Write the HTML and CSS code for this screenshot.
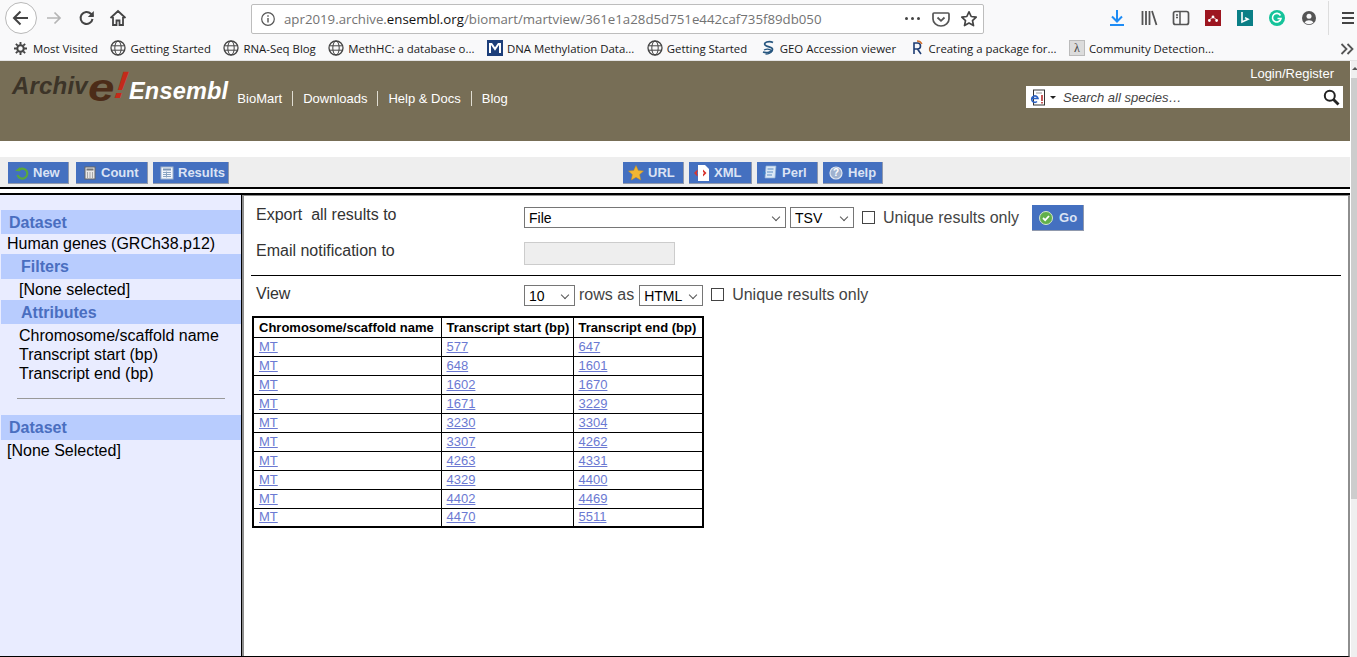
FILE: index.html
```html
<!DOCTYPE html>
<html lang="en">
<head>
<meta charset="utf-8">
<title>BioMart - MartView</title>
<link rel="stylesheet" href="styles.css">
</head>
<body>
<div class="chrome">
  <div class="navbar">
    <span class="backbtn"><svg width="22" height="22" viewBox="0 0 22 22"><path d="M18 11H4M10.500 4.500 4 11l6.500 6.500" fill="none" stroke="#444" stroke-width="2"/></svg></span>
    <svg class="nav-ic fwd" width="18" height="18" viewBox="0 0 18 18"><path d="M2 9h13M9.500 3.500 15 9l-5.500 5.500" fill="none" stroke="#b5b5b5" stroke-width="1.700"/></svg>
    <svg class="nav-ic reload" width="18" height="18" viewBox="0 0 18 18"><path d="M14.500 10a6 6 0 1 1-1.600-5.200L15 7" fill="none" stroke="#444" stroke-width="2"/><path d="M15.800 2v6h-6z" fill="#444"/></svg>
    <svg class="nav-ic home" width="18" height="18" viewBox="0 0 18 18"><path d="M1.500 9 9 2l7.500 7M4 8v8h3.500v-4.500h3V16H14V8" fill="none" stroke="#444" stroke-width="1.800"/></svg>
    <div class="urlbar">
      <svg class="info" width="16" height="16" viewBox="0 0 16 16"><circle cx="8" cy="8" r="6.300" fill="none" stroke="#555" stroke-width="1.200"/><path d="M8 7v4.500M8 4.300v1.500" stroke="#555" stroke-width="1.400"/></svg>
      <span class="url">apr2019.archive.<b>ensembl.org</b>/biomart/martview/361e1a28d5d751e442caf735f89db050</span>
      <span class="dots"><i></i><i></i><i></i></span>
      <svg class="pocket" width="18" height="18" viewBox="0 0 18 18"><path d="M2 3h14a1 1 0 0 1 1 1v5a8 7 0 0 1-16 0V4a1 1 0 0 1 1-1z" fill="none" stroke="#555" stroke-width="1.700"/><path d="m5.500 7.500 3.500 3.300 3.500-3.300" fill="none" stroke="#555" stroke-width="1.800"/></svg>
      <svg class="star" width="18" height="18" viewBox="0 0 18 18"><path d="m9 1.800 2.200 4.700 5 .6-3.700 3.500 1 5L9 13.100l-4.500 2.500 1-5L1.800 7.100l5-.6z" fill="none" stroke="#444" stroke-width="1.700" stroke-linejoin="round"/></svg>
    </div>
    <div class="tools">
      <svg width="18" height="18" viewBox="0 0 18 18"><path d="M9 1v11M4 7.500l5 5 5-5" fill="none" stroke="#1e8cf5" stroke-width="2"/><path d="M2 16h14" stroke="#1e8cf5" stroke-width="2"/></svg>
      <svg width="18" height="18" viewBox="0 0 18 18"><path d="M2.500 2v14M6 2v14M9.500 2v14M12 2l4.500 14" fill="none" stroke="#555" stroke-width="1.800"/></svg>
      <svg width="18" height="18" viewBox="0 0 18 18"><rect x="1.500" y="2.500" width="15" height="13" rx="2" fill="none" stroke="#555" stroke-width="1.700"/><path d="M8 3v12M4 6h2M4 8.500h2" stroke="#555" stroke-width="1.500"/></svg>
      <svg width="16" height="16" viewBox="0 0 16 16"><rect width="16" height="16" fill="#9d1620"/><path d="M3 10.500a1.400 1.400 0 1 1 2.800 0 1.400 1.400 0 1 1-2.800 0zM6.600 7a1.400 1.400 0 1 1 2.800 0 1.400 1.400 0 1 1-2.800 0zM10.200 10.500a1.400 1.400 0 1 1 2.800 0 1.400 1.400 0 1 1-2.800 0z" fill="#fff"/><path d="M5 9.500 7 7.500M9 7.500l2 2" stroke="#fff"/></svg>
      <svg width="16" height="16" viewBox="0 0 16 16"><rect width="16" height="16" fill="#0b7f86"/><path d="M5 2v10l6-2.800-3-1.600" fill="none" stroke="#fff" stroke-width="1.600"/></svg>
      <svg width="16" height="16" viewBox="0 0 16 16"><circle cx="8" cy="8" r="8" fill="#15c39a"/><path d="M11.500 5.500a4.300 4.300 0 1 0 .5 3H8.500" fill="none" stroke="#fff" stroke-width="1.600"/></svg>
      <svg width="16" height="16" viewBox="0 0 16 16"><circle cx="8" cy="8" r="7" fill="#555"/><circle cx="8" cy="6.200" r="2.500" fill="#f9f9fa"/><path d="M3.500 12.500a5 4 0 0 1 9 0 7 7 0 0 1-9 0z" fill="#f9f9fa"/></svg>
    </div>
    <span class="tool-sep"></span>
    <svg class="menu" width="16" height="16" viewBox="0 0 16 16"><path d="M2 3h12M2 8h12M2 13h12" stroke="#444" stroke-width="2"/></svg>
  </div>
  <div class="bookmarks">
    <span class="bm bm-first"><svg width="13" height="13" viewBox="0 0 14 14"><circle cx="7" cy="7" r="3.500" fill="none" stroke="#444" stroke-width="2.200"/><path d="M7 0v3M7 11v3M0 7h3M11 7h3M2 2l2 2M10 10l2 2M12 2l-2 2M4 10l-2 2" stroke="#444" stroke-width="2"/></svg>Most Visited</span>
    <span class="bm"><svg class="globe" viewBox="0 0 16 16"><use href="#globe"/></svg>Getting Started</span>
    <span class="bm"><svg class="globe" viewBox="0 0 16 16"><use href="#globe"/></svg>RNA-Seq Blog</span>
    <span class="bm"><svg class="globe" viewBox="0 0 16 16"><use href="#globe"/></svg>MethHC: a database o...</span>
    <span class="bm"><svg class="globe" viewBox="0 0 16 16"><rect width="16" height="16" fill="#1d3f7a"/><path d="M3 13V4h1.500L8 9l3.500-5H13v9" fill="none" stroke="#fff" stroke-width="2"/></svg>DNA Methylation Data...</span>
    <span class="bm"><svg class="globe" viewBox="0 0 16 16"><use href="#globe"/></svg>Getting Started</span>
    <span class="bm"><svg class="globe" viewBox="0 0 16 16"><path d="M13 2.500C9 .5 3 2.500 5 5s8 1.500 7.500 4.500S6 13 3 12" fill="none" stroke="#27567f" stroke-width="1.700"/><path d="M4 10c3-1.500 6-1 8 1c-1 2-4 3-6.500 3" fill="none" stroke="#27567f" stroke-width="1.300"/></svg>GEO Accession viewer</span>
    <span class="bm"><svg class="globe" viewBox="0 0 16 16"><path d="M5 14V3h3.500a3 3 0 0 1 0 6H5m3.500 0L12 14" fill="none" stroke="#1f3d73" stroke-width="1.600"/><path d="M8 1c2 0 4 1 5 3" fill="none" stroke="#d3702c" stroke-width="1.300"/></svg>Creating a package for...</span>
    <span class="bm"><span class="lambda">λ</span>Community Detection...</span>
    <svg class="chev" width="14" height="14" viewBox="0 0 14 14"><path d="m1.500 2 5 5-5 5M7.500 2l5 5-5 5" fill="none" stroke="#555" stroke-width="1.800"/></svg>
  </div>
</div>

<div class="viewport">
  <div class="page">
    <header class="masthead">
      <div class="brand">
        <span class="logo-archive"><span class="logo-archiv">Archiv</span><i class="logo-e">e</i><i class="logo-bang">!</i></span><span class="logo-ensembl">Ensembl</span>
      </div>
      <nav class="topnav"><a>BioMart</a><a>Downloads</a><a>Help &amp; Docs</a><a>Blog</a></nav>
      <div class="mast-right">
        <a class="login">Login/Register</a>
        <div class="search">
          <svg class="search-species" width="16" height="17" viewBox="0 0 16 17"><rect x="3.500" y="1" width="11" height="15" fill="#fff" stroke="#333"/><path d="M6 4h6" stroke="#999"/><path d="M12 6v6M12 13v1.500" stroke="#b02020" stroke-width="1.500"/><path d="M2 9.500h6a3.200 3.200 0 1 0-1 3" fill="none" stroke="#2b62c4" stroke-width="1.600"/></svg>
          <span class="caret"></span>
          <span class="search-text">Search all species…</span>
          <svg class="loupe" width="17" height="17" viewBox="0 0 17 17"><circle cx="6.800" cy="6.800" r="5" fill="none" stroke="#222" stroke-width="2"/><path d="m10.500 10.500 5 5" stroke="#222" stroke-width="2.800"/></svg>
        </div>
      </div>
    </header>
    <div class="gap"></div>
    <div class="mart-toolbar">
      <div class="btn-group">
        <a class="btn btn-new"><svg viewBox="0 0 14 14"><path d="M3 5a5 5 0 1 1-.5 4" fill="none" stroke="#5aa83c" stroke-width="2.200"/><path d="M0 5h5.500L5 1z" fill="#5aa83c"/></svg>New</a>
        <a class="btn btn-count"><svg viewBox="0 0 14 14"><rect x="2" y="1" width="10" height="12" fill="#e8e8e8" stroke="#666"/><rect x="3.500" y="2.500" width="7" height="2" fill="#777"/><path d="M4 7h1M6.500 7h1M9 7h1M4 9h1M6.500 9h1M9 9h1M4 11h1M6.500 11h1M9 11h1" stroke="#666"/></svg>Count</a>
        <a class="btn btn-results"><svg viewBox="0 0 14 14"><rect x="1" y="1" width="12" height="12" fill="#f2f6fb" stroke="#9fb4cc"/><path d="M3 3.500h8" stroke="#7d97b5" stroke-width="2"/><path d="M3 6.500h8M3 8.500h8M3 10.500h8M6.500 5.500v6" stroke="#8aa5c2"/></svg>Results</a>
      </div>
      <div class="btn-group btn-center">
        <a class="btn btn-url"><svg viewBox="0 0 16 16"><path d="m8 .5 2.300 5 5.200.6-3.900 3.500 1.100 5.400L8 12.300 3.300 15l1.100-5.400L.5 6.100l5.200-.6z" fill="#f2b632" stroke="#c98f1a" stroke-width=".5"/></svg>URL</a>
        <a class="btn btn-xml"><svg viewBox="0 0 16 16"><path d="M4 0h7l4 4v12H4z" fill="#fff"/><path d="m0 8 3.500-3.500v2.300L2.500 8l1 1.200v2.300zM9 4.500 12.500 8 9 11.500V9.200L10 8 9 6.800z" fill="#d8322c"/></svg>XML</a>
        <a class="btn btn-perl"><svg viewBox="0 0 16 16"><path d="M4 1h10l-1 12H3z" fill="#dbe8f6" stroke="#8fb0d4" stroke-width=".7"/><path d="M5.500 4h6M5 7h6M5 10h5" stroke="#5e8fc4"/><path d="m1 6 3 2-3 2z" fill="#3a7fc8"/></svg>Perl</a>
        <a class="btn btn-help"><svg viewBox="0 0 14 14"><circle cx="7" cy="7" r="6" fill="#9fb2cf" stroke="#dfe6f0" stroke-width="1.200"/><text class="help-q" x="7" y="10.300" text-anchor="middle">?</text></svg>Help</a>
      </div>
    </div>
    <div class="rule"></div>
    <main class="workspace">
      <aside class="sidebar">
        <div class="sb-head">Dataset</div>
        <div class="sb-line">Human genes (GRCh38.p12)</div>
        <div class="sb-head sb-sub">Filters</div>
        <div class="sb-line sb-in">[None selected]</div>
        <div class="sb-head sb-sub sb-attr">Attributes</div>
        <div class="sb-list">
          <div>Chromosome/scaffold name</div>
          <div>Transcript start (bp)</div>
          <div>Transcript end (bp)</div>
        </div>
        <div class="sb-divider"></div>
        <div class="sb-head sb-second">Dataset</div>
        <div class="sb-line sb-last">[None Selected]</div>
      </aside>
      <section class="results">
        <div class="form-row row-export">
          <span class="label">Export&nbsp; all results to</span>
          <div class="controls">
            <span class="select sel-file">File</span>
            <span class="select sel-tsv">TSV</span>
            <span class="check"></span>
            <span class="check-label">Unique results only</span>
            <a class="btn btn-go"><svg viewBox="0 0 14 14"><circle cx="7" cy="7" r="6.500" fill="#62b04a" stroke="#d5e8cc"/><path d="m4 7 2.200 2.200L10 5" fill="none" stroke="#fff" stroke-width="1.800"/></svg>Go</a>
          </div>
        </div>
        <div class="form-row row-email">
          <span class="label">Email notification to</span>
          <div class="controls"><span class="email-input"></span></div>
        </div>
        <div class="hr"></div>
        <div class="form-row row-view">
          <span class="label">View</span>
          <div class="controls">
            <span class="select sel-rows">10</span>
            <span class="check-label">rows as</span>
            <span class="select sel-html">HTML</span>
            <span class="check"></span>
            <span class="check-label">Unique results only</span>
          </div>
        </div>
        <table class="preview">
          <thead><tr><th class="c1">Chromosome/scaffold name</th><th class="c2">Transcript start (bp)</th><th class="c3">Transcript end (bp)</th></tr></thead>
          <tbody>
            <tr><td><a>MT</a></td><td><a>577</a></td><td><a>647</a></td></tr>
            <tr><td><a>MT</a></td><td><a>648</a></td><td><a>1601</a></td></tr>
            <tr><td><a>MT</a></td><td><a>1602</a></td><td><a>1670</a></td></tr>
            <tr><td><a>MT</a></td><td><a>1671</a></td><td><a>3229</a></td></tr>
            <tr><td><a>MT</a></td><td><a>3230</a></td><td><a>3304</a></td></tr>
            <tr><td><a>MT</a></td><td><a>3307</a></td><td><a>4262</a></td></tr>
            <tr><td><a>MT</a></td><td><a>4263</a></td><td><a>4331</a></td></tr>
            <tr><td><a>MT</a></td><td><a>4329</a></td><td><a>4400</a></td></tr>
            <tr><td><a>MT</a></td><td><a>4402</a></td><td><a>4469</a></td></tr>
            <tr><td><a>MT</a></td><td><a>4470</a></td><td><a>5511</a></td></tr>
          </tbody>
        </table>
      </section>
    </main>
  </div>
  <div class="scrollbar"><span class="sb-arrow"></span><span class="thumb"></span></div>
</div>
<svg class="defs" width="0" height="0"><defs><g id="globe"><circle cx="8" cy="8" r="7" fill="none" stroke="#444" stroke-width="1.300"/><ellipse cx="8" cy="8" rx="3.200" ry="7" fill="none" stroke="#444"/><path d="M1.500 5.800h13M1.500 10.200h13" stroke="#444"/></g></defs></svg>
</body>
</html>
```
FILE: styles.css
```css
* { box-sizing: border-box; }
html, body { margin: 0; height: 657px; overflow: hidden; background: #fff; }
body { font-family: "Liberation Sans", Arial, sans-serif; color: #000; display: flex; flex-direction: column; }
a { cursor: pointer; }
.defs { position: absolute; }

.chrome { height: 61px; background: #f9f9fa; flex: none; font-family: "Open Sans", sans-serif; }
.navbar { height: 36px; display: flex; align-items: center; }
.backbtn { width: 32px; height: 32px; margin-left: 5px; border: 1px solid #b9b9b9; border-radius: 50%; display: flex; align-items: center; justify-content: center; background: #fff; flex: none; }
.nav-ic { flex: none; }
.fwd { margin-left: 8px; }
.reload { margin-left: 15px; }
.home { margin-left: 13px; }
.urlbar { width: 733px; height: 30px; margin-left: 124px; margin-top: 1px; background: #fff; border: 1px solid #bdbdbd; border-radius: 2px; display: flex; align-items: center; padding: 0 5px 0 8px; flex: none; }
.url { margin-left: 8px; font-size: 13.250px; color: #737373; white-space: nowrap; flex: 1; }
.url b { font-weight: 400; color: #111; }
.info { flex: none; }
.dots { display: flex; gap: 3px; margin-right: 12px; }
.dots i { width: 3px; height: 3px; border-radius: 50%; background: #444; }
.pocket { margin-right: 10px; }
.tools { display: grid; grid-template-columns: repeat(7, 32px); justify-items: center; align-items: center; margin-left: 117px; flex: none; }
.tool-sep { width: 1px; height: 34px; background: #ddd; margin-left: 3px; }
.menu { margin-left: 11px; }
.bookmarks { height: 25px; display: flex; align-items: center; font-size: 11.400px; color: #1a1a1a; position: relative; padding-left: 14px; border-bottom: 1px solid #e4e4e4; }
.bm { display: inline-flex; align-items: center; gap: 4px; white-space: nowrap; margin-right: 12.500px; }
.bm-first { gap: 6px; }
.globe { width: 16px; height: 16px; flex: none; }
.lambda { width: 16px; height: 16px; background: #dcdcdc; border: 1px solid #bbb; font-family: "Liberation Serif", serif; font-size: 12px; display: inline-flex; align-items: center; justify-content: center; color: #444; }
.chev { position: absolute; right: 3px; top: 6px; }

.viewport { flex: 1; display: flex; min-height: 0; }
.page { width: 1350px; flex: none; display: flex; flex-direction: column; }
.scrollbar { flex: 1; margin-left: 1px; background: #efefef; position: relative; }
.sb-arrow { position: absolute; left: 1px; top: 6px; width: 0; height: 0; border: 3px solid transparent; border-bottom-color: #555; border-top: 0; }
.thumb { display: block; height: 421px; background: #cdcdcd; margin-top: 17px; }

.masthead { height: 80px; background: #776e56; display: flex; flex: none; }
.brand { margin: 9px 0 0 12px; display: flex; align-items: flex-start; font-family: "Liberation Sans", sans-serif; font-weight: 700; font-style: italic; white-space: nowrap; }
.logo-archive { font-size: 24px; color: #3c3428; line-height: 32px; letter-spacing: .2px; position: relative; width: 117px; }
.logo-e { font-size: 38px; color: #4c2c18; font-weight: 700; position: absolute; left: 76px; top: -5px; line-height: 46px; transform: scaleX(1.250); transform-origin: left; }
.logo-bang { font-size: 38px; color: #c42a1a; position: absolute; left: 103px; top: -8px; line-height: 46px; transform: skewX(-8deg); }
.logo-ensembl { font-size: 23.500px; color: #fff; line-height: 32px; margin-top: 5px; letter-spacing: .2px; }
.topnav { display: flex; margin: 29px 0 0 9px; height: 16px; align-items: center; font-size: 13px; }
.topnav a { color: #fff; padding: 0 10px; border-left: 1px solid #e0ddd2; line-height: 15px; }
.topnav a:first-child { border-left: 0; padding-left: 0; }
.mast-right { margin-left: auto; width: 325px; padding-right: 7px; display: flex; flex-direction: column; align-items: flex-end; }
.login { color: #fff; font-size: 13px; margin: 6px 9px 0 0; line-height: 14px; }
.search { width: 317px; height: 22px; background: #fff; margin-top: 5px; display: flex; align-items: center; padding: 0 3px 0 4px; }
.caret { width: 0; height: 0; border: 3px solid transparent; border-top-color: #222; border-bottom: 0; margin-left: 4px; }
.search-text { font-size: 13px; font-style: italic; color: #444; margin-left: 7px; flex: 1; }

.gap { height: 16px; flex: none; }
.mart-toolbar { height: 30px; background: #eee; display: flex; align-items: flex-start; padding: 5px 0 0 8px; position: relative; flex: none; }
.btn-group { display: flex; gap: 5px; }
.btn-center { position: absolute; left: 623px; top: 5px; }
.btn { display: inline-flex; align-items: center; height: 22px; padding: 0 0 0 7px; gap: 4px; background: #4470c0; color: #dbe3f4; font-size: 13px; font-weight: 700; border-right: 1px solid #9099ad; border-bottom: 1px solid #9099ad; white-space: nowrap; }
.btn svg { width: 14px; height: 14px; flex: none; }
.btn-new { width: 61px; margin-right: 2px; }
.btn-count { width: 72px; }
.btn-results { width: 76px; }
.btn-center .btn svg { width: 16px; height: 16px; }
.btn-center .btn { padding-left: 5px; }
.btn-url { width: 61px; }
.btn-xml { width: 63px; }
.btn-perl { width: 61px; }
.btn-help { width: 60px; }
.btn-center .btn-help { padding-left: 6px; gap: 5px; }
.btn-center .btn-help svg { width: 14px; height: 14px; }
.help-q { font: 700 10px "Liberation Sans", sans-serif; fill: #fff; }
.rule { height: 8px; border-top: 2px solid #000; border-bottom: 2px solid #000; background: #fff; flex: none; }

.workspace { flex: 1; min-height: 0; display: flex; border-bottom: 1px solid #000; border-right: 2px solid #8e8e8e; }
.sidebar { width: 242px; flex: none; background: #e9ecff; border-right: 1px solid #000; padding: 15px 0 0 1px; font-size: 16px; line-height: 20px; }
.sb-head { height: 24px; line-height: 25px; background: #b8ccfe; color: #4a6ec0; font-weight: 700; padding-left: 8px; }
.sb-line { padding-left: 6px; line-height: 20px; height: 20px; white-space: nowrap; }
.sb-sub { padding-left: 20px; height: 25px; }
.sb-in { padding-left: 18px; height: 21px; line-height: 21px; }
.sb-attr { height: 24px; }
.sb-list { padding: 2px 0 0 18px; line-height: 19px; height: 74px; }
.sb-divider { height: 1px; background: #999; margin: 0 16px; }
.sb-second { margin-top: 16px; height: 25px; }
.sb-last { margin-top: 1px; }

.results { flex: 1; min-width: 0; padding: 0 8px; border-left: 2px solid #8e8e8e; border-top: 1px solid #8e8e8e; font-size: 16px; color: #333; }
.form-row { display: flex; }
.label { width: 272px; padding: 1px 0 0 4px; flex: none; color: #333; white-space: nowrap; line-height: 18px; }
.controls { display: flex; align-items: flex-start; gap: 4px; flex: 1; }
.row-export { height: 42px; padding-top: 9px; }
.row-export .select { margin-top: 2px; }
.row-export .check { margin-top: 6px; }
.row-export .check-label { margin-top: 4px; line-height: 18px; }
.row-email { height: 37px; padding-top: 3px; }
.select { display: inline-flex; align-items: center; height: 21px; border: 1px solid #767676; background: #fff; color: #000; font-size: 14px; padding-left: 4px; position: relative; flex: none; }
.select::after { content: ""; position: absolute; right: 6px; top: 6px; width: 5px; height: 5px; border-right: 1px solid #555; border-bottom: 1px solid #555; transform: rotate(45deg); }
.sel-file { width: 262px; }
.sel-tsv { width: 64px; }
.check { width: 13px; height: 13px; border: 1px solid #444; background: #fff; margin-left: 4px; margin-right: 4px; flex: none; }
.check-label { color: #444; white-space: nowrap; }
.btn-go { height: 26px; width: 52px; margin-left: 9px; padding: 0 0 0 7px; gap: 6px; }
.email-input { width: 151px; height: 23px; background: #eee; border: 1px solid #ccc; margin-top: 1px; }
.hr { height: 1px; background: #000; margin: 0 -1px; }
.row-view { height: 40px; padding-top: 8px; }
.sel-rows { width: 51px; }
.sel-html { width: 64px; margin-left: 1px; }
.row-view .select { margin-top: 1px; }
.row-view .check { margin-top: 4px; }
.row-view .check-label { margin-top: 2px; line-height: 18px; }
.preview { border-collapse: collapse; border: 2px solid #000; margin-left: 0; font-size: 13px; color: #000; table-layout: fixed; width: 450px; }
.preview .c1 { width: 188px; }
.preview .c2 { width: 132px; }
.preview .c3 { width: 130px; }
.preview th { font-weight: 700; text-align: left; height: 20px; padding: 1px 5px 0; border: 1px solid #000; white-space: nowrap; line-height: 14px; }
.preview td { height: 19px; padding: 0 5px; border: 1px solid #000; line-height: 14px; }
.preview a { color: #6b79d2; text-decoration: underline; }
```
